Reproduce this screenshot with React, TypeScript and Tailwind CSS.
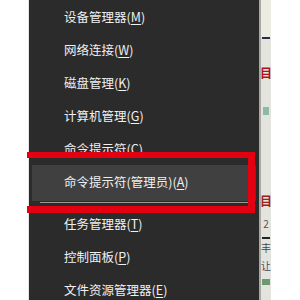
type Item = { label: string; key: string };

const topItems: Item[] = [
	{ label: "设备管理器", key: "M" },
	{ label: "网络连接", key: "W" },
	{ label: "磁盘管理", key: "K" },
	{ label: "计算机管理", key: "G" },
	{ label: "命令提示符", key: "C" },
];

const bottomItems: Item[] = [
	{ label: "任务管理器", key: "T" },
	{ label: "控制面板", key: "P" },
	{ label: "文件资源管理器", key: "E" },
];

function Row({ item }: { item: Item }) {
	return (
		<div className="h-[33px] flex items-center pl-[35px] text-[12.5px] text-[#f0f0f0] whitespace-nowrap">
			<span>
				{item.label}(<span className="underline underline-offset-2">{item.key}</span>)
			</span>
		</div>
	);
}

export default function App() {
	return (
		<div
			className="relative w-[300px] h-[300px] overflow-hidden flex bg-white"
			style={{ fontFamily: '"Noto Sans CJK SC", "Noto Sans", sans-serif' }}
		>
			{/* left desktop strip */}
			<div className="w-[29px] shrink-0 h-full bg-white border-r border-[#e4e4e4]" />

			{/* Win+X menu */}
			<div className="w-[230px] shrink-0 h-full bg-[#2b2b2b] overflow-hidden">
				<div className="pt-[0.5px]">
					{topItems.map((it) => (
						<Row key={it.key} item={it} />
					))}
				</div>
				<div className="mx-[3px] -mt-[1px] h-[36px] bg-[#404040] flex items-center pl-[32px] text-[12.5px] text-[#f0f0f0] whitespace-nowrap">
					<span>
						命令提示符(管理员)(<span className="underline underline-offset-2">A</span>)
					</span>
				</div>
				<div className="h-[7px] pt-[1px] pl-[11px] pr-[9px]">
					<div className="w-full h-px bg-[#9a9a8e]" />
				</div>
				<div>
					{bottomItems.map((it) => (
						<Row key={it.key} item={it} />
					))}
				</div>
			</div>

			{/* window behind */}
			<div className="w-[12px] shrink-0 h-full bg-[#e4e4de] border-l-2 border-[#a8a8a4] flex flex-col items-center text-[10px] leading-none overflow-hidden">
				<div className="h-[37px] w-full shrink-0 bg-[#ecece2]" />
				<div className="w-[8px] h-[2px] shrink-0 bg-[#2a2a50]" />
				<div className="h-[28px] shrink-0" />
				<div className="text-[#b01020] text-[12px] font-bold">目</div>
				<div className="h-[28px] shrink-0" />
				<div className="w-[6px] h-[8px] shrink-0 bg-[#8fb8a8]" />
				<div className="h-[80px] shrink-0" />
				<div className="text-[#a02020] text-[12px] font-bold">目</div>
				<div className="h-[12px] shrink-0" />
				<div className="text-[#555]">2</div>
				<div className="h-[8px] shrink-0" />
				<div className="w-[8px] h-[2px] shrink-0 bg-[#222]" />
				<div className="h-[4px] shrink-0" />
				<div className="text-[#444]">丰</div>
				<div className="h-[8px] shrink-0" />
				<div className="text-[#446]">让</div>
				<div className="h-[8px] shrink-0" />
				<div className="w-[8px] h-[6px] shrink-0 bg-[#6a9a70]" />
			</div>
			<div className="flex-1 h-full bg-white" />

			{/* red highlight frame */}
			<div className="absolute left-[27px] top-[152px] w-[228px] h-[61px] border-t-[6px] border-b-[7px] border-r-[7px] border-[#e30010]" />
		</div>
	);
}
